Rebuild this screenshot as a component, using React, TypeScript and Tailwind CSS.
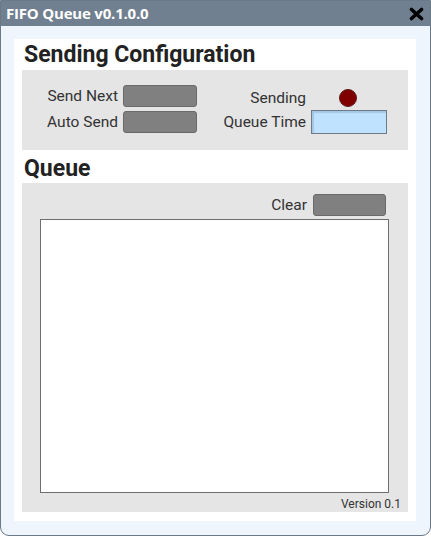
const grayBtn =
  "h-[22px] w-[74px] rounded-[3px] border border-[#6a6a6a] bg-[#808080]";

export default function App() {
  return (
    <div className="flex h-[536px] w-[431px] flex-col overflow-hidden rounded-b-[9px] border border-[#6b7886] bg-[#eef5fd] font-['Roboto',sans-serif] text-[#333]">
      {/* Title bar */}
      <div className="-mx-px -mt-px flex h-[26px] shrink-0 items-center justify-between bg-[#708090] pl-[6px] pr-[7px]">
        <span className="font-['Open_Sans',sans-serif] text-[15px] font-bold tracking-[-0.2px] text-white">
          FIFO Queue v0.1.0.0
        </span>
        <svg width="15" height="14" viewBox="0 0 15 14" className="mt-[1px]">
          <path d="M2.5 2.5 L12.5 11.5 M12.5 2.5 L2.5 11.5" stroke="#000" strokeWidth="3.6" strokeLinecap="round" />
        </svg>
      </div>

      {/* Body */}
      <div className="ml-[13px] mr-[14px] mt-[13px] flex h-[482px] flex-col bg-white px-[8px]">
        <h2 className="h-[31px] pl-[2px] pt-[1px] text-[23px] font-bold leading-[30px] text-[#222]">
          Sending Configuration
        </h2>
        <div className="grid h-[80px] grid-cols-[96px_74px_104px_76px] grid-rows-[22px_24px] content-start items-center gap-x-[5px] gap-y-[3px] bg-[#e5e5e5] pt-[15px] text-[15.5px] leading-[20px]">
          <span className="text-right">Send Next</span>
          <div className={grayBtn} />
          <span className="pt-[3px] text-right">Sending</span>
          <div className="flex justify-center">
            <div className="ml-[-2px] mt-[3px] h-[18px] w-[18px] rounded-full border border-[#5e1a1a] bg-[#800000]" />
          </div>
          <span className="text-right">Auto Send</span>
          <div className={grayBtn} />
          <span className="text-right">Queue Time</span>
          <div className="h-[24px] w-[76px] border border-[#6f7c88] bg-[#bfe3fe] shadow-[inset_2px_2px_1px_rgba(80,120,160,0.25)]" />
        </div>

        <h2 className="h-[33px] pl-[2px] pt-[3px] text-[23px] font-bold leading-[31px] text-[#222]">
          Queue
        </h2>
        <div className="flex h-[329px] flex-col bg-[#e5e5e5] pt-[11px]">
          <div className="flex h-[22px] items-center justify-end gap-[6px] pr-[22px] text-[15.5px] leading-[20px]">
            <span>Clear</span>
            <div className="h-[22px] w-[73px] rounded-[3px] border border-[#6a6a6a] bg-[#808080]" />
          </div>
          <div className="ml-[18px] mr-[19px] mt-[3px] h-[274px] border border-[#6e6e6e] bg-white" />
          <div className="mt-[3px] pr-[7px] text-right text-[12px] leading-[16px]">Version 0.1</div>
        </div>
      </div>
    </div>
  );
}
